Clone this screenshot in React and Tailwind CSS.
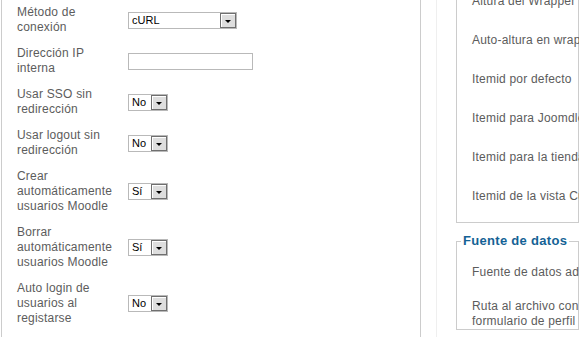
import React from "react";

// Joomla-style component options (left: connection settings, right: item ids / data source)
const leftRows = [
  { label: "Método de conexión", control: "select", value: "cURL", width: "w-[109px]" },
  { label: "Dirección IP interna", control: "input" },
  { label: "Usar SSO sin redirección", control: "select", value: "No", width: "w-[40px]" },
  { label: "Usar logout sin redirección", control: "select", value: "No", width: "w-[40px]" },
  { label: "Crear automáticamente usuarios Moodle", control: "select", value: "Sí", width: "w-[40px]" },
  { label: "Borrar automáticamente usuarios Moodle", control: "select", value: "Sí", width: "w-[40px]" },
  { label: "Auto login de usuarios al registarse", control: "select", value: "No", width: "w-[40px]" },
];

const rightItems = [
  "Altura del Wrapper",
  "Auto-altura en wrapper",
  "Itemid por defecto",
  "Itemid para Joomdle",
  "Itemid para la tienda",
  "Itemid de la vista Curso",
];

function SelectBox({ value, width }) {
  return (
    <div className={`${width} h-[17px] border border-[#b9b9b9] bg-white flex items-center justify-between`}>
      <span className="pl-[3px] text-[11px] leading-none text-black tracking-normal">{value}</span>
      <span className="h-[15px] w-[16px] border border-[#6f6f6f] bg-[#dedede] shadow-[inset_1px_1px_0_#fff] flex items-end justify-center pb-[4px]">
        <span className="w-0 h-0 border-l-[3px] border-r-[3px] border-t-[3px] border-l-transparent border-r-transparent border-t-black" />
      </span>
    </div>
  );
}

function TextInput() {
  return <div className="w-[125px] h-[17px] border border-[#b9b9b9] bg-white" />;
}

export default function App() {
  return (
    <div className="w-[579px] h-[337px] overflow-hidden bg-white flex font-['Liberation_Sans',Arial,sans-serif] text-[12px] tracking-[0.2px] text-[#5c5c5c]">
      {/* Left fieldset */}
      <div className="ml-px w-[420px] shrink-0 h-full border-x border-[#cccccc] pl-[15px] pt-[5px] flex flex-col gap-[11px]">
        {leftRows.map((row) => (
          <div key={row.label} className="flex items-center">
            <div className="w-[104px] mr-[7px] leading-[15px]">{row.label}</div>
            {row.control === "input" ? (
              <TextInput />
            ) : (
              <SelectBox value={row.value} width={row.width} />
            )}
          </div>
        ))}
      </div>

      {/* Right column */}
      <div className="ml-[15px] h-full border-l border-[#efefef] pl-[19px] flex-1 min-w-0">
        <div className="-mt-[6px] border-x border-b border-[#cccccc] pl-[15px] pb-[18px] flex flex-col gap-[24px] leading-[15px] whitespace-nowrap">
          {rightItems.map((item) => (
            <div key={item}>{item}</div>
          ))}
        </div>

        <fieldset className="mt-[10px] border border-[#cccccc] pl-[4px] min-w-0">
          <legend className="px-[2px] text-[13px] leading-[16px] font-bold tracking-[0.3px] text-[#146295]">Fuente de datos</legend>
          <div className="pl-[11px] leading-[15px]">
            <div className="mt-[16px] whitespace-nowrap">Fuente de datos adicional</div>
            <div className="mt-[19px] whitespace-nowrap">
              Ruta al archivo con
              <br />
              formulario de perfil
            </div>
          </div>
        </fieldset>
      </div>
    </div>
  );
}
